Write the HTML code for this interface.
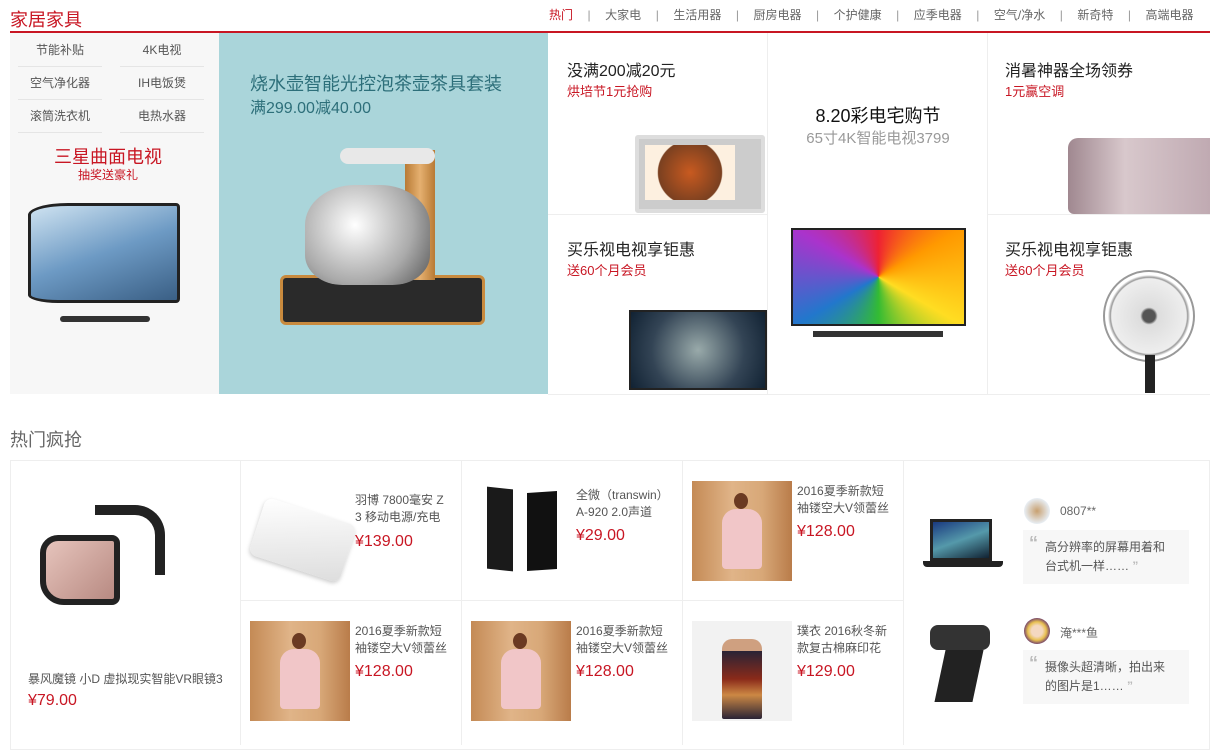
<!DOCTYPE html>
<html><head><meta charset="utf-8"><style>
*{margin:0;padding:0;box-sizing:border-box}
body{width:1218px;height:745px;background:#fff;font-family:"Liberation Sans","Noto Sans CJK SC",sans-serif;position:relative;overflow:hidden;color:#333}
.a{position:absolute}
.red{color:#c81623}
.nav{position:absolute;top:6px;right:10px;font-size:12px;color:#666;white-space:nowrap}
.nav span{margin:0 14.5px}
.nav i{font-style:normal;color:#999}
.lk{position:absolute;font-size:12px;color:#555;text-align:center;width:84px;line-height:32px;border-bottom:1px solid #e5e5e5}
.t1{font-size:16px;color:#222}
.t2{font-size:13px;color:#c81623}
.bl{border-left:1px solid #eee}
.bt{border-top:1px solid #eee}
.pt{position:absolute;font-size:12px;color:#555;line-height:17px;width:92px;word-break:break-all}
.pp{position:absolute;font-size:16px;color:#c81623}
.dress{position:absolute;width:100px;height:100px;background:linear-gradient(90deg,#c48a55,#e0b488 40%,#d8a878 70%,#b97c4a)}
.dress:after{content:"";position:absolute;left:30px;top:28px;width:40px;height:60px;background:#f1c6c8;border-radius:14px 14px 4px 4px}
.dress:before{content:"";position:absolute;left:42px;top:12px;width:14px;height:16px;background:#6b3a22;border-radius:50%}
.cm{position:absolute;background:#f7f7f7;width:166px;height:54px;font-size:12px;color:#555;line-height:19px;padding:8px 0 0 22px}
.cm b{position:absolute;left:6px;top:4px;color:#bbb;font-size:18px;font-weight:bold}
.av{position:absolute;width:26px;height:26px;border-radius:50%}
</style></head><body>
<div class="a red" style="left:10px;top:6px;font-size:18px">家居家具</div>
<div class="nav"><span class="red">热门</span><i>|</i><span>大家电</span><i>|</i><span>生活用器</span><i>|</i><span>厨房电器</span><i>|</i><span>个护健康</span><i>|</i><span>应季电器</span><i>|</i><span>空气/净水</span><i>|</i><span>新奇特</span><i>|</i><span>高端电器</span></div>
<div class="a" style="left:10px;top:31px;width:1200px;height:2px;background:#c81623"></div>

<div class="a" style="left:10px;top:33px;width:209px;height:361px;background:#f7f7f7"></div>
<div class="lk" style="left:18px;top:34px">节能补贴</div><div class="lk" style="left:120px;top:34px">4K电视</div>
<div class="lk" style="left:18px;top:67px">空气净化器</div><div class="lk" style="left:120px;top:67px">IH电饭煲</div>
<div class="lk" style="left:18px;top:100px">滚筒洗衣机</div><div class="lk" style="left:120px;top:100px">电热水器</div>
<div class="a red" style="left:10px;width:196px;text-align:center;top:143px;font-size:18px">三星曲面电视</div>
<div class="a red" style="left:10px;width:196px;text-align:center;top:166px;font-size:12px">抽奖送豪礼</div>
<div class="a" style="left:28px;top:203px;width:152px;height:100px;background:linear-gradient(160deg,#cfe3f1,#6d9ac4 50%,#3a5f85);border:3px solid #222;border-radius:40px 4px 4px 30px/12px 4px 4px 8px"></div>
<div class="a" style="left:60px;top:316px;width:90px;height:6px;background:#333;border-radius:3px"></div>

<div class="a" style="left:219px;top:33px;width:329px;height:361px;background:#aad5da"></div>
<div class="a" style="left:250px;top:70px;font-size:18px;color:#2d6f7a">烧水壶智能光控泡茶壶茶具套装</div>
<div class="a" style="left:250px;top:94px;font-size:16px;color:#2d6f7a">满299.00减40.00</div>
<div class="a" style="left:280px;top:275px;width:205px;height:50px;background:#2a2a2a;border:3px solid #c88a3e;border-radius:6px"></div>
<div class="a" style="left:405px;top:150px;width:30px;height:130px;background:linear-gradient(90deg,#b87a35,#e5b070,#b87a35)"></div>
<div class="a" style="left:340px;top:148px;width:95px;height:16px;background:#e8e8e8;border-radius:8px"></div>
<div class="a" style="left:305px;top:185px;width:125px;height:100px;background:radial-gradient(circle at 40% 40%,#fff,#aaa 60%,#555);border-radius:40% 40% 30% 30%"></div>

<div class="a bl" style="left:767px;top:33px;height:361px"></div>
<div class="a bl" style="left:987px;top:33px;height:361px"></div>
<div class="a bt" style="left:548px;top:214px;width:220px"></div>
<div class="a bt" style="left:988px;top:214px;width:222px"></div>
<div class="a bt" style="left:548px;top:394px;width:662px"></div>
<div class="a t1" style="left:567px;top:57px">没满200减20元</div>
<div class="a t2" style="left:567px;top:81px">烘培节1元抢购</div>
<div class="a" style="left:635px;top:135px;width:130px;height:78px;background:#ccc;border:4px solid #ddd;border-radius:3px"><div style="margin:6px;width:90px;height:55px;background:radial-gradient(circle,#c85a20,#7a4020 60%,#fdf0e0 62%)"></div></div>
<div class="a" style="left:768px;top:102px;width:220px;text-align:center;font-size:18px;color:#111">8.20彩电宅购节</div>
<div class="a" style="left:768px;top:127px;width:220px;text-align:center;font-size:15px;color:#999">65寸4K智能电视3799</div>
<div class="a" style="left:791px;top:228px;width:175px;height:98px;background:conic-gradient(#e23,#f90,#fd2,#3b3,#27c,#a3c,#e23);border:2px solid #222"></div>
<div class="a" style="left:813px;top:331px;width:130px;height:6px;background:#333"></div>
<div class="a t1" style="left:1005px;top:57px">消暑神器全场领券</div>
<div class="a t2" style="left:1005px;top:81px">1元赢空调</div>
<div class="a" style="left:1068px;top:138px;width:142px;height:76px;background:linear-gradient(90deg,#a08890,#d8c8cc 40%,#c0aab2);border-radius:10px 0 0 6px"></div>
<div class="a t1" style="left:567px;top:236px">买乐视电视享钜惠</div>
<div class="a t2" style="left:567px;top:260px">送60个月会员</div>
<div class="a" style="left:629px;top:310px;width:138px;height:80px;background:radial-gradient(circle at 50% 50%,#9aa,#345 60%,#123);border:2px solid #222"></div>
<div class="a t1" style="left:1005px;top:236px">买乐视电视享钜惠</div>
<div class="a t2" style="left:1005px;top:260px">送60个月会员</div>
<div class="a" style="left:1103px;top:270px;width:92px;height:92px;border-radius:50%;background:radial-gradient(circle,#555 10%,#ddd 14%,#eee 60%,#999 62%,#fff 66%);border:2px solid #999"></div>
<div class="a" style="left:1145px;top:355px;width:10px;height:38px;background:#222"></div>

<div class="a" style="left:10px;top:426px;font-size:18px;color:#666">热门疯抢</div>
<div class="a" style="left:10px;top:460px;width:1200px;height:290px;border:1px solid #eee"></div>
<div class="a bl" style="left:240px;top:460px;height:285px"></div>
<div class="a bl" style="left:461px;top:460px;height:285px"></div>
<div class="a bl" style="left:682px;top:460px;height:285px"></div>
<div class="a bl" style="left:903px;top:460px;height:285px"></div>
<div class="a bt" style="left:240px;top:600px;width:663px"></div>

<div class="a" style="left:40px;top:535px;width:80px;height:70px;background:linear-gradient(135deg,#e6c4bc,#b88a82);border:6px solid #222;border-radius:18px 8px 8px 24px"></div>
<div class="a" style="left:95px;top:505px;width:70px;height:70px;border:10px solid #222;border-left:none;border-bottom:none;border-radius:0 30px 0 0"></div>
<div class="pt" style="left:28px;top:671px;width:210px">暴风魔镜 小D 虚拟现实智能VR眼镜3</div>
<div class="pp" style="left:28px;top:692px">¥79.00</div>

<div class="a" style="left:255px;top:510px;width:95px;height:60px;background:linear-gradient(160deg,#fff,#ddd);border-radius:8px;transform:rotate(18deg);box-shadow:0 2px 4px #ccc"></div>
<div class="pt" style="left:355px;top:492px">羽博 7800毫安 Z3 移动电源/充电</div>
<div class="pp" style="left:355px;top:533px">¥139.00</div>

<div class="a" style="left:487px;top:488px;width:26px;height:82px;background:#1a1a1a;transform:skewY(6deg)"></div>
<div class="a" style="left:527px;top:492px;width:30px;height:78px;background:#111;transform:skewY(-4deg)"></div>
<div class="pt" style="left:576px;top:487px">全微（transwin）A-920 2.0声道</div>
<div class="pp" style="left:576px;top:527px">¥29.00</div>

<div class="dress" style="left:692px;top:481px"></div>
<div class="pt" style="left:797px;top:483px">2016夏季新款短袖镂空大V领蕾丝</div>
<div class="pp" style="left:797px;top:523px">¥128.00</div>

<div class="dress" style="left:250px;top:621px"></div>
<div class="pt" style="left:355px;top:623px">2016夏季新款短袖镂空大V领蕾丝</div>
<div class="pp" style="left:355px;top:663px">¥128.00</div>
<div class="dress" style="left:471px;top:621px"></div>
<div class="pt" style="left:576px;top:623px">2016夏季新款短袖镂空大V领蕾丝</div>
<div class="pp" style="left:576px;top:663px">¥128.00</div>
<div class="a" style="left:692px;top:621px;width:100px;height:100px;background:#f2f2f2"><div style="margin:18px 0 0 30px;width:40px;height:80px;background:linear-gradient(#cfa080 0 15%,#2a2436 15%,#8a2a1a 50%,#c84 70%,#2a2436);border-radius:10px 10px 2px 2px"></div></div>
<div class="pt" style="left:797px;top:623px">璞衣 2016秋冬新款复古棉麻印花</div>
<div class="pp" style="left:797px;top:663px">¥129.00</div>

<div class="a" style="left:930px;top:519px;width:62px;height:42px;background:linear-gradient(160deg,#1a3a80,#59a 50%,#123);border:3px solid #222"></div>
<div class="a" style="left:923px;top:561px;width:80px;height:6px;background:#222;border-radius:0 0 4px 4px"></div>
<div class="av" style="left:1024px;top:498px;background:radial-gradient(circle,#c8a070,#e8eef4 70%)"></div>
<div class="a" style="left:1060px;top:504px;font-size:12px;color:#666">0807**</div>
<div class="cm" style="left:1023px;top:530px"><b>“</b>高分辨率的屏幕用着和<br>台式机一样…… <span style="color:#bbb;font-weight:bold">”</span></div>
<div class="a" style="left:930px;top:625px;width:60px;height:25px;background:#333;border-radius:8px"></div>
<div class="a" style="left:940px;top:650px;width:38px;height:52px;background:#222;transform:skewX(-12deg)"></div>
<div class="av" style="left:1024px;top:618px;background:radial-gradient(circle,#f4d8c0 30%,#e8c050 50%,#7a4a6a 70%)"></div>
<div class="a" style="left:1060px;top:624px;font-size:12px;color:#666">淹***鱼</div>
<div class="cm" style="left:1023px;top:650px"><b>“</b>摄像头超清晰，拍出来<br>的图片是1…… <span style="color:#bbb;font-weight:bold">”</span></div>
</body></html>
